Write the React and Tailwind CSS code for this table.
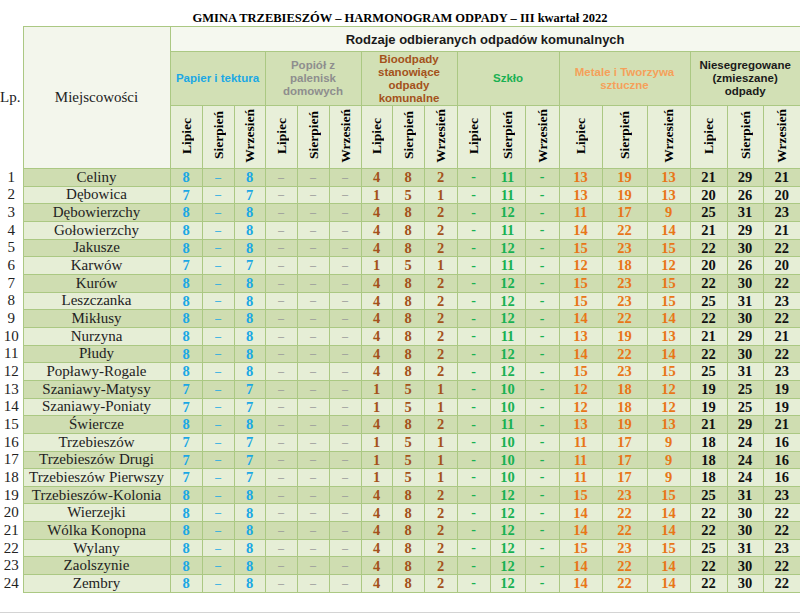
const ROWS = [
  ['Celiny', 8, 8, [4, 8, 2], 11, [13, 19, 13], [21, 29, 21]],
  ['Dębowica', 7, 7, [1, 5, 1], 11, [13, 19, 13], [20, 26, 20]],
  ['Dębowierzchy', 8, 8, [4, 8, 2], 12, [11, 17, 9], [25, 31, 23]],
  ['Gołowierzchy', 8, 8, [4, 8, 2], 11, [14, 22, 14], [21, 29, 21]],
  ['Jakusze', 8, 8, [4, 8, 2], 12, [15, 23, 15], [22, 30, 22]],
  ['Karwów', 7, 7, [1, 5, 1], 11, [12, 18, 12], [20, 26, 20]],
  ['Kurów', 8, 8, [4, 8, 2], 12, [15, 23, 15], [22, 30, 22]],
  ['Leszczanka', 8, 8, [4, 8, 2], 12, [15, 23, 15], [25, 31, 23]],
  ['Mikłusy', 8, 8, [4, 8, 2], 12, [14, 22, 14], [22, 30, 22]],
  ['Nurzyna', 8, 8, [4, 8, 2], 11, [13, 19, 13], [21, 29, 21]],
  ['Płudy', 8, 8, [4, 8, 2], 12, [14, 22, 14], [22, 30, 22]],
  ['Popławy-Rogale', 8, 8, [4, 8, 2], 12, [15, 23, 15], [25, 31, 23]],
  ['Szaniawy-Matysy', 7, 7, [1, 5, 1], 10, [12, 18, 12], [19, 25, 19]],
  ['Szaniawy-Poniaty', 7, 7, [1, 5, 1], 10, [12, 18, 12], [19, 25, 19]],
  ['Świercze', 8, 8, [4, 8, 2], 11, [13, 19, 13], [21, 29, 21]],
  ['Trzebieszów', 7, 7, [1, 5, 1], 10, [11, 17, 9], [18, 24, 16]],
  ['Trzebieszów Drugi', 7, 7, [1, 5, 1], 10, [11, 17, 9], [18, 24, 16]],
  ['Trzebieszów Pierwszy', 7, 7, [1, 5, 1], 10, [11, 17, 9], [18, 24, 16]],
  ['Trzebieszów-Kolonia', 8, 8, [4, 8, 2], 12, [15, 23, 15], [25, 31, 23]],
  ['Wierzejki', 8, 8, [4, 8, 2], 12, [14, 22, 14], [22, 30, 22]],
  ['Wólka Konopna', 8, 8, [4, 8, 2], 12, [14, 22, 14], [22, 30, 22]],
  ['Wylany', 8, 8, [4, 8, 2], 12, [15, 23, 15], [25, 31, 23]],
  ['Zaolszynie', 8, 8, [4, 8, 2], 12, [14, 22, 14], [22, 30, 22]],
  ['Zembry', 8, 8, [4, 8, 2], 12, [14, 22, 14], [22, 30, 22]],
]

const WIDTHS = [23, 147, 32, 32, 31, 32, 32, 32, 31, 32, 33, 33, 35, 34, 43, 45, 43, 37, 36, 37]

const CATEGORIES = [
  { label: ['Papier i tektura'], color: 'text-[#1ba8e4]' },
  { label: ['Popiół z', 'palenisk', 'domowych'], color: 'text-[#8e8e8e]' },
  { label: ['Bioodpady', 'stanowiące', 'odpady', 'komunalne'], color: 'text-[#a4521b]' },
  { label: ['Szkło'], color: 'text-[#19b152]' },
  { label: ['Metale i Tworzywa', 'sztuczne'], color: 'text-[#f5a05a]' },
  { label: ['Niesegregowane', '(zmieszane)', 'odpady'], color: 'text-[#1a1a1a]' },
]

const MONTHS = ['Lipiec', 'Sierpień', 'Wrzesień']

const cell = 'border border-[#abc883] p-0 text-center align-middle'
const serif = "font-['Liberation_Serif',serif]"
const sans = "font-['Liberation_Sans',Arial,sans-serif]"

function Num({ v, color }) {
  return <td className={`${cell} ${serif} ${color} font-bold text-[14.5px]`}>{v}</td>
}

function Dash({ color, kind }) {
  if (kind === 'szklo') return <td className={`${cell} ${serif} ${color} font-bold text-[14px]`}>-</td>
  return <td className={`${cell} ${color} ${sans} text-[11px]`}>–</td>
}

export default function App() {
  return (
    <div className={`w-[800px] h-[613px] bg-white overflow-hidden ${serif} border-b border-[#d4d4d4]`}>
      <div className="h-[26px] pt-[11px] text-center text-[12.5px] leading-[14px] font-bold text-black">
        GMINA TRZEBIESZÓW – HARMONOGRAM ODPADY – III kwartał 2022
      </div>
      <table className={`table-fixed border-collapse w-[800px] ${serif} text-[15px] leading-none`}>
        <colgroup>
          {WIDTHS.map((w, i) => (
            <col key={i} style={{ width: w }} />
          ))}
        </colgroup>
        <tbody>
          <tr className="h-[25px]">
            <td rowSpan={3} className={`p-0 pr-[4px] text-center align-middle bg-white ${serif} text-[15px] text-[#222]`}>Lp.</td>
            <td rowSpan={3} className={`${cell} bg-[#f3f6ec] ${serif} text-[15px] text-[#222]`}>Miejscowości</td>
            <td colSpan={18} className={`${cell} bg-[#f5f8ef] ${sans} font-bold text-[13px] text-[#1a1a1a]`}>
              Rodzaje odbieranych odpadów komunalnych
            </td>
          </tr>
          <tr className="h-[54px]">
            {CATEGORIES.map((c) => (
              <td key={c.label[0]} colSpan={3} className={`${cell} bg-[#d2e0b5] ${sans} font-bold text-[11.5px] leading-[13px] ${c.color}`}>
                {c.label.map((l) => (
                  <div key={l}>{l}</div>
                ))}
              </td>
            ))}
          </tr>
          <tr className="h-[63px]">
            {CATEGORIES.map((c) =>
              MONTHS.map((m) => (
                <td key={c.label[0] + m} className={`${cell} bg-[#e8efd9]`}>
                  <div className={`inline-block [writing-mode:vertical-rl] rotate-180 ${serif} font-bold text-[13.5px] leading-[13px] text-black`}>
                    {m}
                  </div>
                </td>
              ))
            )}
          </tr>
          {ROWS.map((r, i) => {
            const bg = i % 2 === 0 ? 'bg-[#cfddb1]' : 'bg-[#e6eed6]'
            return (
              <tr key={r[0]} className={`h-[17.67px] ${bg}`}>
                <td className={`p-0 text-center align-middle bg-white ${serif} text-[15px] text-[#222]`}>{i + 1}</td>
                <td className={`${cell} ${serif} text-[15px] text-[#222] whitespace-nowrap`}>{r[0]}</td>
                <Num v={r[1]} color="text-[#1ba8e4]" />
                <Dash color="text-[#1ba8e4]" />
                <Num v={r[2]} color="text-[#1ba8e4]" />
                <Dash color="text-[#9a9a9a]" />
                <Dash color="text-[#9a9a9a]" />
                <Dash color="text-[#9a9a9a]" />
                {r[3].map((v, j) => (
                  <Num key={'b' + j} v={v} color="text-[#a4521b]" />
                ))}
                <Dash color="text-[#19b152]" kind="szklo" />
                <Num v={r[4]} color="text-[#19b152]" />
                <Dash color="text-[#19b152]" kind="szklo" />
                {r[5].map((v, j) => (
                  <Num key={'m' + j} v={v} color="text-[#e87618]" />
                ))}
                {r[6].map((v, j) => (
                  <Num key={'n' + j} v={v} color="text-[#111]" />
                ))}
              </tr>
            )
          })}
        </tbody>
      </table>
    </div>
  )
}
